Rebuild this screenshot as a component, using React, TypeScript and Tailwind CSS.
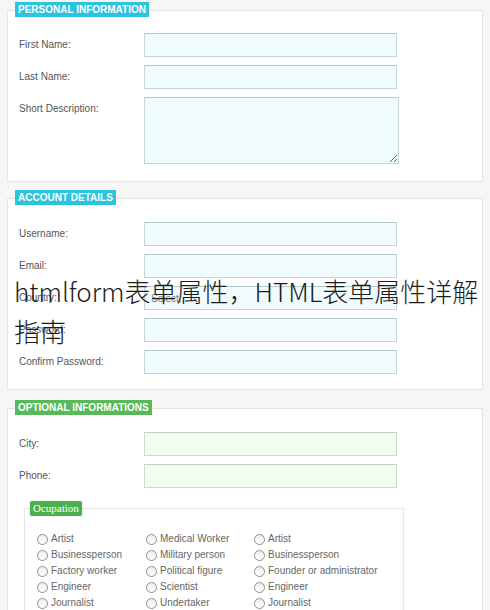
import React from "react";

const font = { fontFamily: '"Liberation Sans", Arial, sans-serif' };

function Legend({ text, color }: { text: string; color: "cyan" | "green" }) {
  return (
    <div
      className={
        "self-start -mt-[9px] -ml-[4px] h-[15px] px-[3px] flex items-center text-[10px] font-bold uppercase leading-none text-white " +
        (color === "cyan" ? "bg-[#2cc3df]" : "bg-[#57b957]")
      }
    >
      {text}
    </div>
  );
}

function Row({
  label,
  green,
  children,
}: {
  label: string;
  green?: boolean;
  children?: React.ReactNode;
}) {
  return (
    <div className="flex items-start">
      <div className="w-[125px] shrink-0 pt-[5px] text-[10px] leading-[13px] text-[#555]">{label}</div>
      {children ?? (
        <input
          className={
            "block h-[24px] w-[253px] border outline-none " +
            (green
              ? "border-[#cbdccb] border-t-[#bfd0bf] bg-[#f1fdf1]"
              : "border-[#c3d6d9] border-t-[#b5c8cb] bg-[#f0fbfd]")
          }
        />
      )}
    </div>
  );
}

function Radio({ label }: { label: string }) {
  return (
    <div className="flex h-[16px] items-center gap-[3px]">
      <span className="block h-[11px] w-[11px] rounded-full border border-[#8f8f8f] bg-gradient-to-b from-[#eeeeee] to-white" />
      <span className="text-[10px] leading-none text-[#666]">{label}</span>
    </div>
  );
}

export default function App() {
  const col1 = ["Artist", "Businessperson", "Factory worker", "Engineer", "Journalist"];
  const col2 = ["Medical Worker", "Military person", "Political figure", "Scientist", "Undertaker"];
  const col3 = ["Artist", "Businessperson", "Founder or administrator", "Engineer", "Journalist"];

  return (
    <div className="relative h-[610px] w-[490px] overflow-hidden bg-[#f6f6f6] pt-[10px]" style={font}>
      {/* Personal information */}
      <div className="mx-[7px] flex flex-col border border-[#e4e4e4] bg-white pl-[11px] pb-[17px]">
        <Legend text="Personal Information" color="cyan" />
        <div className="mt-[16px] flex flex-col gap-[8px]">
          <Row label="First Name:" />
          <Row label="Last Name:" />
          <Row label="Short Description:">
            <textarea className="block h-[67px] w-[255px] border border-[#c3d6d9] border-t-[#b5c8cb] bg-[#f0fbfd] outline-none" />
          </Row>
        </div>
      </div>

      {/* Account details */}
      <div className="mx-[7px] mt-[16px] flex flex-col border border-[#e4e4e4] bg-white pl-[11px] pb-[15px]">
        <Legend text="Account Details" color="cyan" />
        <div className="mt-[17px] flex flex-col gap-[8px]">
          <Row label="Username:" />
          <Row label="Email:" />
          <Row label="Country:">
            <div className="flex h-[24px] w-[253px] items-center border border-[#c3d6d9] border-t-[#b5c8cb] bg-[#f0fbfd] pl-[6px] text-[10px] text-[#777]">
              Select...
            </div>
          </Row>
          <Row label="Password:" />
          <Row label="Confirm Password:" />
        </div>
      </div>

      {/* Optional informations */}
      <div className="mx-[7px] mt-[18px] flex flex-col border border-[#e4e4e4] bg-white pl-[11px] pb-[20px]">
        <Legend text="Optional Informations" color="green" />
        <div className="mt-[17px] flex flex-col gap-[8px]">
          <Row label="City:" green />
          <Row label="Phone:" green />
        </div>
        <div className="ml-[5px] mt-[20px] flex w-[380px] flex-col border border-[#e6e6e6] bg-white pb-[10px] pl-[12px]">
          <div
            className="self-start -mt-[8px] -ml-[7px] flex h-[15px] items-center rounded-[2px] bg-[#4cb04f] px-[3px] text-[11px] leading-none text-white shadow-[0_0_2px_rgba(0,0,0,0.2)]"
            style={{ fontFamily: '"Liberation Serif", "Times New Roman", serif' }}
          >
            Ocupation
          </div>
          <div className="mt-[15px] flex">
            <div className="flex w-[109px] flex-col">
              {col1.map((l, i) => (
                <Radio key={i} label={l} />
              ))}
            </div>
            <div className="flex w-[108px] flex-col">
              {col2.map((l, i) => (
                <Radio key={i} label={l} />
              ))}
            </div>
            <div className="flex flex-col">
              {col3.map((l, i) => (
                <Radio key={i} label={l} />
              ))}
            </div>
          </div>
        </div>
      </div>

      {/* Overlay caption */}
      <div
        className="absolute left-[14px] top-[271px] w-[470px] text-[26px] font-light leading-[40px] text-[#1c1c1c]"
        style={{ fontFamily: '"Noto Sans CJK SC", "Noto Sans", sans-serif' }}
      >
        htmlform表单属性，HTML表单属性详解指南
      </div>
    </div>
  );
}
